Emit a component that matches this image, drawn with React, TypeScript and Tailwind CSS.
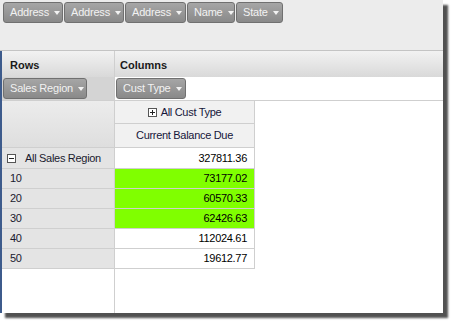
import React from "react";

const font = { fontFamily: '"Liberation Sans", Arial, sans-serif' };

function Caret() {
  return (
    <svg width="6" height="4" viewBox="0 0 6 4" className="ml-[5px] mt-[1px] shrink-0">
      <path d="M0 0h6L3 4z" fill="#f2f2f2" />
    </svg>
  );
}

function FieldButton({ label, className = "" }: { label: string; className?: string }) {
  return (
    <div
      className={
        "flex h-[21px] shrink-0 items-center overflow-hidden whitespace-nowrap rounded-[3px] border border-[#707070] bg-gradient-to-b from-[#a6a6a6] to-[#898989] pl-[6px] text-[11px] tracking-[-0.2px] text-[#f2f2f2] " +
        className
      }
    >
      <span>{label}</span>
      <Caret />
    </div>
  );
}

function PlusMinus({ minus }: { minus?: boolean }) {
  return (
    <svg width="9" height="9" viewBox="0 0 9 9" className="shrink-0">
      <rect x="0.5" y="0.5" width="8" height="8" fill="#fff" stroke="#555" />
      <path d="M2 4.5h5" stroke="#222" />
      {!minus && <path d="M4.5 2v5" stroke="#222" />}
    </svg>
  );
}

const rows = [
  { label: "10", value: "73177.02", hot: true },
  { label: "20", value: "60570.33", hot: true },
  { label: "30", value: "62426.63", hot: true },
  { label: "40", value: "112024.61", hot: false },
  { label: "50", value: "19612.77", hot: false },
];

export default function App() {
  return (
    <div className="h-[323px] w-[452px] bg-white" style={font}>
      <div className="flex h-[313px] w-[443px] flex-col bg-white shadow-[5px_5px_2px_rgba(50,50,50,0.85)]">
        {/* field pool */}
        <div className="flex h-[51px] shrink-0 items-start gap-[1px] border-b border-[#c4c4c4] bg-[#ececec] pl-[3px] pt-[2px]">
          <FieldButton label="Address" className="w-[60px]" />
          <FieldButton label="Address" className="w-[60px]" />
          <FieldButton label="Address" className="w-[61px]" />
          <FieldButton label="Name" className="w-[48px]" />
          <FieldButton label="State" className="w-[47px]" />
        </div>

        <div className="flex flex-1 flex-col border-l-2 border-[#3d5b8c]">
          {/* rows / columns heading */}
          <div className="flex h-[26px] shrink-0 bg-gradient-to-b from-[#f2f2f2] to-[#d9d9d9] text-[11px] font-bold text-[#1a1a1a]">
            <div className="flex w-[113px] items-center border-r border-[#cfcfcf] pl-[8px] pt-[2px]">Rows</div>
            <div className="flex items-center pl-[5px] pt-[2px]">Columns</div>
          </div>

          {/* drop zones */}
          <div className="flex h-[24px] shrink-0 border-b border-[#cfcfcf]">
            <div className="flex w-[113px] items-center border-r border-[#cfcfcf] bg-[#d4d4d4] pl-[1px]">
              <FieldButton label="Sales Region" className="w-[84px]" />
            </div>
            <div className="flex items-center bg-white pl-[1px]">
              <FieldButton label="Cust Type" className="w-[70px]" />
            </div>
          </div>

          {/* table */}
          <div className="flex flex-1 text-[11px] tracking-[-0.3px]">
            <div className="flex w-[113px] flex-col border-r border-[#cfcfcf]">
              <div className="h-[47px] border-b border-[#cfcfcf] bg-gradient-to-b from-[#ececec] to-[#dedede]" />
              <div className="flex h-[21px] items-center gap-[9px] border-b border-[#cfcfcf] bg-[#e4e4e4] pl-[5px] text-[#1a1a2e]">
                <PlusMinus minus />
                <span>All Sales Region</span>
              </div>
              {rows.map((r) => (
                <div
                  key={r.label}
                  className="flex h-[20px] items-center border-b border-[#cfcfcf] bg-[#e4e4e4] pl-[8px] text-[#1a1a2e]"
                >
                  {r.label}
                </div>
              ))}
            </div>

            <div className="flex flex-col">
              <div className="flex h-[23px] w-[140px] items-center justify-center gap-[4px] border-b border-r border-[#cfcfcf] bg-[#f1f1f1] text-[#16163a]">
                <PlusMinus />
                <span>All Cust Type</span>
              </div>
              <div className="flex h-[24px] w-[140px] items-center justify-center border-b border-r border-[#cfcfcf] bg-[#f1f1f1] text-[#16163a]">
                Current Balance Due
              </div>
              <div className="flex h-[21px] w-[140px] items-center justify-end border-b border-r border-[#cfcfcf] bg-white pr-[7px] text-black">
                327811.36
              </div>
              {rows.map((r) => (
                <div
                  key={r.label}
                  className={
                    "flex h-[20px] w-[140px] items-center justify-end border-b border-r border-[#cfcfcf] pr-[7px] text-black " +
                    (r.hot ? "bg-[#80ff00]" : "bg-white")
                  }
                >
                  {r.value}
                </div>
              ))}
            </div>
            <div className="flex-1" />
          </div>
        </div>
      </div>
    </div>
  );
}
